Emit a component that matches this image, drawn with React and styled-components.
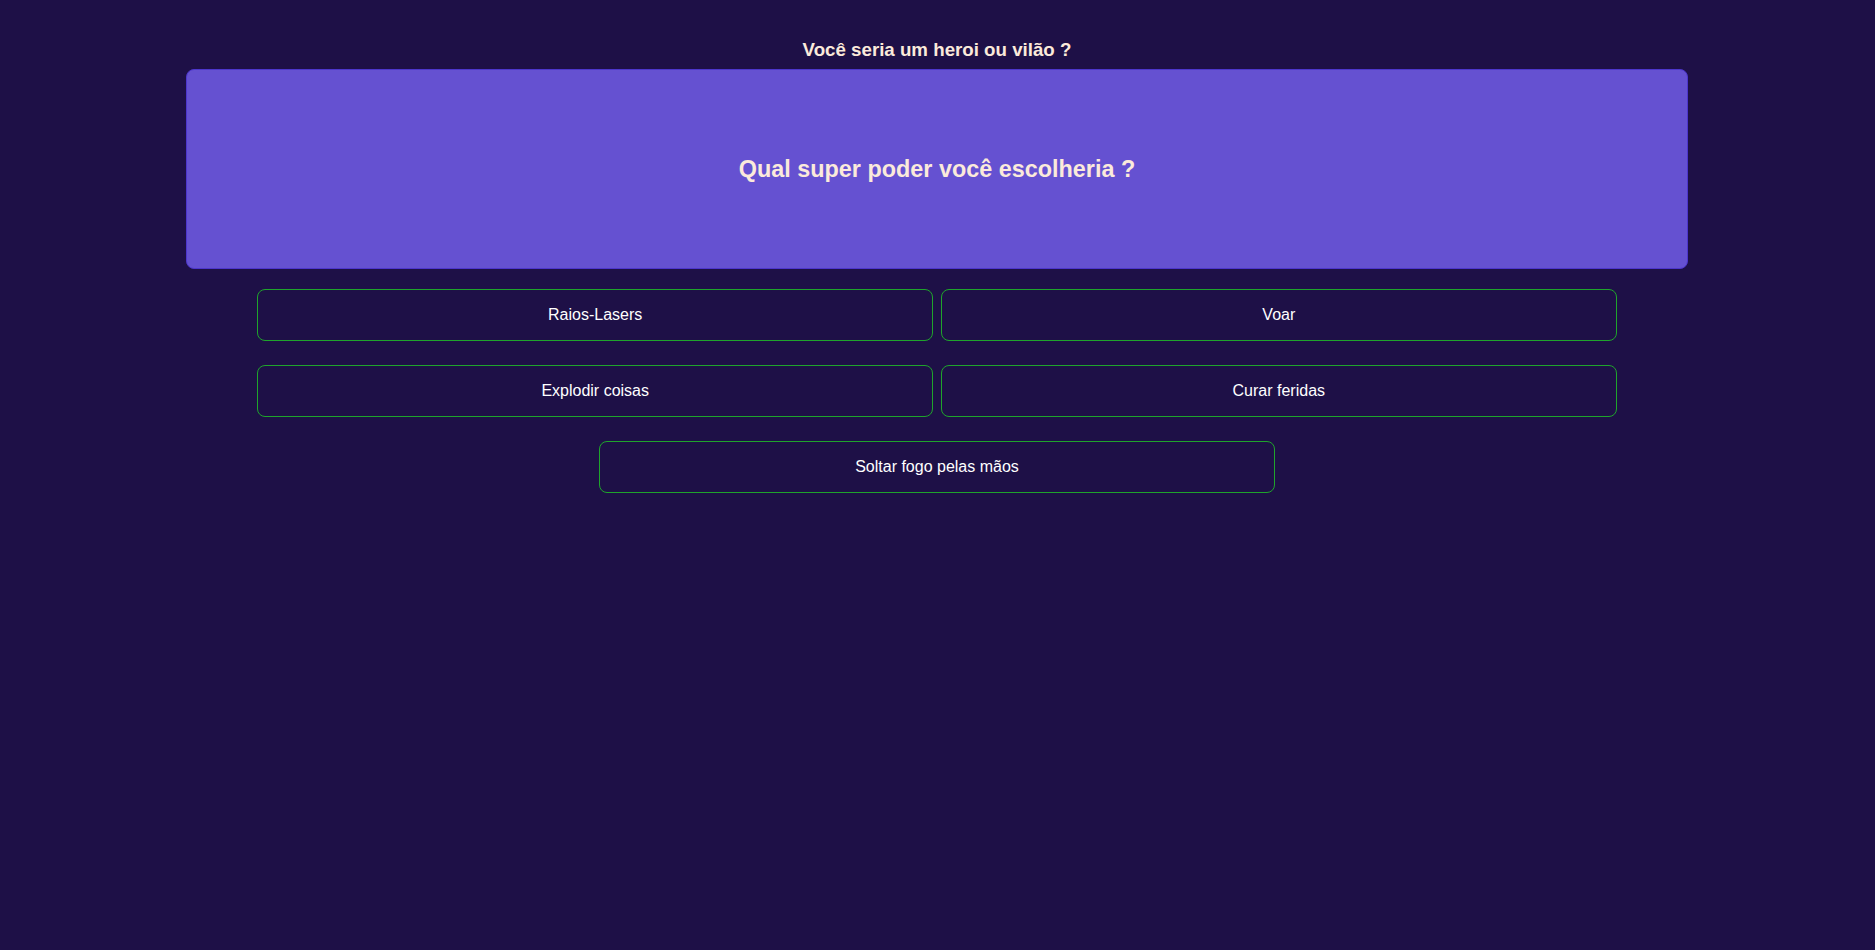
import React from "react";
import styled, { createGlobalStyle } from "styled-components";

const GlobalStyle = createGlobalStyle`
  html, body {
    margin: 0;
    padding: 0;
    background: #1e1047;
    font-family: "Liberation Sans", Arial, sans-serif;
  }
  * { box-sizing: border-box; }
`;

const Page = styled.main`
  min-height: 950px;
  display: flex;
  flex-direction: column;
  align-items: center;
  padding: 39px 1px 0 0;
`;

const Title = styled.h3`
  margin: 0 0 8px;
  font-size: 18.72px;
  line-height: 22px;
  font-weight: 700;
  color: #fbeadb;
  text-align: center;
`;

const QuestionCard = styled.section`
  width: calc(80% + 2px);
  height: 200px;
  background: #6551d1;
  border: 1px solid #4d36cc;
  border-radius: 8px;
  display: flex;
  align-items: center;
  justify-content: center;
`;

const Question = styled.h2`
  margin: 0;
  font-size: 23.4px;
  font-weight: 700;
  color: #fbeadb;
  text-align: center;
`;

const Options = styled.div`
  margin-top: 20px;
  width: 100%;
  display: flex;
  flex-wrap: wrap;
  justify-content: center;
  column-gap: 8px;
  row-gap: 24px;
`;

const OptionButton = styled.button`
  width: calc(36% + 1px);
  height: 52px;
  background: transparent;
  border: 1px solid #1fa42c;
  border-radius: 8px;
  color: #ffffff;
  font-family: "Liberation Sans", Arial, sans-serif;
  font-size: 16px;
  cursor: pointer;
  display: flex;
  align-items: center;
  justify-content: center;
  padding: 0;
`;

const options = [
  "Raios-Lasers",
  "Voar",
  "Explodir coisas",
  "Curar feridas",
  "Soltar fogo pelas mãos",
];

export default function App() {
  return (
    <>
      <GlobalStyle />
      <Page>
        <Title>Você seria um heroi ou vilão ?</Title>
        <QuestionCard>
          <Question>Qual super poder você escolheria ?</Question>
        </QuestionCard>
        <Options>
          {options.map((o) => (
            <OptionButton key={o}>{o}</OptionButton>
          ))}
        </Options>
      </Page>
    </>
  );
}
